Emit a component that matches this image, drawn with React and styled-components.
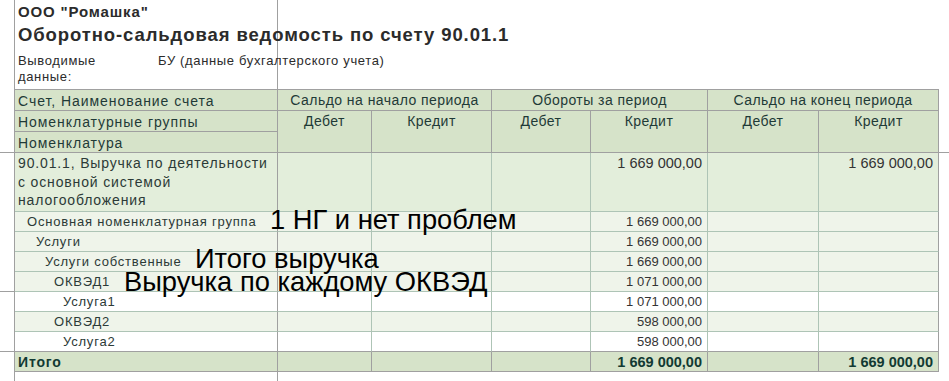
import React from 'react';
import styled, { createGlobalStyle } from 'styled-components';

const Global = createGlobalStyle`
  html, body { margin: 0; padding: 0; background: #ffffff; }
  body { font-family: "Liberation Sans", Arial, sans-serif; }
`;

const GRID = '#a0a0a0';
const SOFT = '#aec4b6';

const tones = {
  head: '#d6e3c9',
  account: '#e3eedb',
  group: '#eff4ea',
  item: '#ffffff',
  total: '#d6e3c9',
};

const Page = styled.div`
  position: relative;
  width: 949px;
  height: 381px;
  overflow: hidden;
  display: grid;
  grid-template-columns: 15px 924px 1fr;
  font-family: "Liberation Sans", Arial, sans-serif;
`;

const Gutter = styled.div`
  display: flex;
  flex-direction: column;
  box-sizing: border-box;
  border-right: ${(p) => (p.$ruled ? `1px solid ${GRID}` : 'none')};
`;

const GutterSeg = styled.div`
  flex: none;
  height: ${(p) => p.$h}px;
  box-sizing: border-box;
  border-bottom: 1px solid ${GRID};
`;

const Main = styled.div`
  display: flex;
  flex-direction: column;
`;

const ReportHead = styled.div`
  height: 89px;
  box-sizing: border-box;
  padding: 2px 0 0 3px;
  color: #2b2b2b;
  background: linear-gradient(${GRID}, ${GRID}) 262px 0 / 1px 100% no-repeat;
`;

const Company = styled.div`
  font-size: 15px;
  letter-spacing: 0.85px;
  font-weight: bold;
  line-height: 20px;
`;

const Title = styled.div`
  margin-top: 2px;
  font-size: 18.5px;
  letter-spacing: 0.9px;
  font-weight: bold;
  line-height: 22px;
`;

const InfoRow = styled.div`
  margin-top: 7px;
  display: flex;
  font-size: 13px;
  letter-spacing: 0.65px;
  line-height: 16px;
`;

const InfoLabel = styled.div`
  width: 140px;
  flex: none;
`;

const Sheet = styled.div`
  display: grid;
  grid-template-columns: 263px 94px 120px 99px 117px 111px 120px;
  grid-template-rows: 21px 21px 21px 59px repeat(8, 20px) 20px;
  border-top: 1px solid ${GRID};
`;

const HCell = styled.div`
  box-sizing: border-box;
  background: ${tones.head};
  border-right: 1px solid ${GRID};
  border-bottom: 1px solid ${GRID};
  grid-column: span ${(p) => p.$span || 1};
  grid-row: span ${(p) => p.$rows || 1};
  padding: ${(p) => (p.$center ? '0 2px' : '1px 3px 0')};
  font-size: 14px;
  letter-spacing: ${(p) => (p.$center ? '0.45px' : '0.95px')};
  line-height: 20px;
  color: #1f3a37;
  text-align: ${(p) => (p.$center ? 'center' : 'left')};
  white-space: nowrap;
`;

const DCell = styled.div`
  box-sizing: border-box;
  background: ${(p) => tones[p.$tone]};
  border-right: 1px solid ${(p) => (p.$strong || p.$tone === 'total' ? GRID : SOFT)};
  border-bottom: 1px solid ${(p) => (p.$tone === 'total' || p.$lastBody ? GRID : SOFT)};
  padding: ${(p) => (p.$big ? '1px' : '0')} ${(p) => (p.$num ? 5 : 1)}px 0 ${(p) => p.$indent || 3}px;
  font-size: ${(p) => (p.$big ? (p.$num ? 14.5 : 14) : 13)}px;
  letter-spacing: ${(p) => (p.$num ? '0px' : p.$big ? '0.85px' : '0.8px')};
  line-height: ${(p) => (p.$big ? '18.5px' : '19px')};
  font-weight: ${(p) => (p.$tone === 'total' ? 'bold' : 'normal')};
  color: ${(p) => (p.$tone === 'total' ? '#123a33' : p.$num ? '#333333' : '#2c3a37')};
  text-align: ${(p) => (p.$num ? 'right' : 'left')};
  white-space: nowrap;
  overflow: hidden;
`;

const TailCell = styled.div`
  grid-column: ${(p) => (p.$first ? 'auto' : 'span 6')};
  box-sizing: border-box;
  border-right: ${(p) => (p.$first ? `1px solid ${GRID}` : 'none')};
`;

const Note = styled.div`
  position: absolute;
  left: ${(p) => p.$x}px;
  top: ${(p) => p.$y}px;
  font-family: "Liberation Sans", Arial, sans-serif;
  font-size: 27.3px;
  line-height: 27px;
  color: #000;
  white-space: nowrap;
  pointer-events: none;
`;

const rows = [
  {
    label: ['90.01.1, Выручка по деятельности', 'с основной системой', 'налогообложения'],
    tone: 'account',
    big: true,
    indent: 3,
    turnCredit: '1 669 000,00',
    endCredit: '1 669 000,00',
  },
  { label: 'Основная номенклатурная группа', tone: 'group', indent: 12, turnCredit: '1 669 000,00' },
  { label: 'Услуги', tone: 'group', indent: 21, turnCredit: '1 669 000,00' },
  { label: 'Услуги собственные', tone: 'group', indent: 30, turnCredit: '1 669 000,00' },
  { label: 'ОКВЭД1', tone: 'group', indent: 39, turnCredit: '1 071 000,00' },
  { label: 'Услуга1', tone: 'item', indent: 48, turnCredit: '1 071 000,00' },
  { label: 'ОКВЭД2', tone: 'group', indent: 39, turnCredit: '598 000,00' },
  { label: 'Услуга2', tone: 'item', indent: 48, turnCredit: '598 000,00', lastBody: true },
  { label: 'Итого', tone: 'total', indent: 3, turnCredit: '1 669 000,00', endCredit: '1 669 000,00', big: true },
];

function DataRow({ row }) {
  const { tone, big, lastBody } = row;
  const values = ['', '', '', row.turnCredit || '', '', row.endCredit || ''];
  return (
    <>
      <DCell $tone={tone} $big={big} $indent={row.indent} $strong $lastBody={lastBody}>
        {Array.isArray(row.label)
          ? row.label.map((l, i) => (
              <React.Fragment key={i}>
                {l}
                {i < row.label.length - 1 && <br />}
              </React.Fragment>
            ))
          : row.label}
      </DCell>
      {values.map((v, i) => (
        <DCell key={i} $tone={tone} $big={big} $num $strong={i === 5} $lastBody={lastBody}>
          {v}
        </DCell>
      ))}
    </>
  );
}

export default function App() {
  return (
    <>
      <Global />
      <Page>
        <Gutter $ruled>
          <GutterSeg $h={153} />
          <GutterSeg $h={139} />
          <GutterSeg $h={60} />
        </Gutter>
        <Main>
          <ReportHead>
            <Company>ООО "Ромашка"</Company>
            <Title>Оборотно-сальдовая ведомость по счету 90.01.1</Title>
            <InfoRow>
              <InfoLabel>
                Выводимые
                <br />
                данные:
              </InfoLabel>
              <div>БУ (данные бухгалтерского учета)</div>
            </InfoRow>
          </ReportHead>
          <Sheet>
            <HCell>Счет, Наименование счета</HCell>
            <HCell $span={2} $center>Сальдо на начало периода</HCell>
            <HCell $span={2} $center>Обороты за период</HCell>
            <HCell $span={2} $center>Сальдо на конец периода</HCell>
            <HCell>Номенклатурные группы</HCell>
            <HCell $rows={2} $center>Дебет</HCell>
            <HCell $rows={2} $center>Кредит</HCell>
            <HCell $rows={2} $center>Дебет</HCell>
            <HCell $rows={2} $center>Кредит</HCell>
            <HCell $rows={2} $center>Дебет</HCell>
            <HCell $rows={2} $center>Кредит</HCell>
            <HCell>Номенклатура</HCell>
            {rows.map((r, i) => (
              <DataRow key={i} row={r} />
            ))}
            <TailCell $first />
            <TailCell />
          </Sheet>
        </Main>
        <Gutter>
          <GutterSeg $h={153} />
        </Gutter>
        <Note $x={270} $y={206}>1 НГ и нет проблем</Note>
        <Note $x={195} $y={245}>Итого выручка</Note>
        <Note $x={124} $y={268}>Выручка по каждому ОКВЭД</Note>
      </Page>
    </>
  );
}
